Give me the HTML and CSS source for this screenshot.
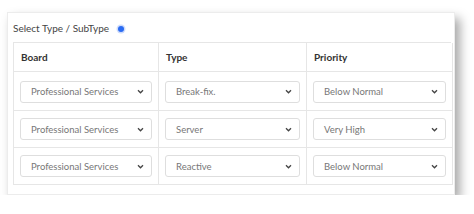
FILE: index.html
```html
<!DOCTYPE html>
<html lang="en">
<head>
    <meta charset="UTF-8">
    <title>Select Type</title>
    <link rel="stylesheet" href="styles.css">
</head>
<body>
    <div class="card">
        <div class="title">Select Type / SubType <span class="dot"></span></div>
        <div class="grid">
            <div class="cell head">Board</div>
            <div class="cell head">Type</div>
            <div class="cell head last">Priority</div>

            <div class="cell row1"><div class="sel">Professional Services<svg viewBox="0 0 8 6"><path d="M1 1.5 4 4.5 7 1.5"/></svg></div></div>
            <div class="cell row1"><div class="sel">Break-fix.<svg viewBox="0 0 8 6"><path d="M1 1.5 4 4.5 7 1.5"/></svg></div></div>
            <div class="cell row1 last"><div class="sel">Below Normal<svg viewBox="0 0 8 6"><path d="M1 1.5 4 4.5 7 1.5"/></svg></div></div>

            <div class="cell"><div class="sel">Professional Services<svg viewBox="0 0 8 6"><path d="M1 1.5 4 4.5 7 1.5"/></svg></div></div>
            <div class="cell"><div class="sel">Server<svg viewBox="0 0 8 6"><path d="M1 1.5 4 4.5 7 1.5"/></svg></div></div>
            <div class="cell last"><div class="sel">Very High<svg viewBox="0 0 8 6"><path d="M1 1.5 4 4.5 7 1.5"/></svg></div></div>

            <div class="cell bottom"><div class="sel">Professional Services<svg viewBox="0 0 8 6"><path d="M1 1.5 4 4.5 7 1.5"/></svg></div></div>
            <div class="cell bottom"><div class="sel">Reactive<svg viewBox="0 0 8 6"><path d="M1 1.5 4 4.5 7 1.5"/></svg></div></div>
            <div class="cell bottom last"><div class="sel">Below Normal<svg viewBox="0 0 8 6"><path d="M1 1.5 4 4.5 7 1.5"/></svg></div></div>
        </div>
    </div>
</body>
</html>
```

FILE: styles.css
```css
*{
    margin: 0;
    padding: 0;
    box-sizing: border-box;
}
body{
    background: #fff;
    font-family: Lato, "Open Sans", sans-serif;
    color: #333;
}
.card{
    margin: 12px 0 0 7px;
    width: 448px;
    height: 183px;
    padding: 0 3px 0 5px;
    background: #fff;
    border: 1px solid #ececec;
    box-shadow: 5px 6px 10px rgba(0,0,0,0.35);
}
.title{
    height: 29px;
    font-size: 10px;
    color: #444;
    display: flex;
    align-items: center;
}
.dot{
    display: inline-block;
    width: 6px;
    height: 6px;
    margin: 3px 0 0 9px;
    border-radius: 50%;
    background: #2a6bf2;
    box-shadow: 0 0 0 1.5px #cfdcfb;
}
.grid{
    display: grid;
    grid-template-columns: 145px 148px 146px;
    grid-template-rows: 29px 39px 37px 37px;
    border-top: 1px solid #e6e6e6;
    border-left: 1px solid #e6e6e6;
}
.cell{
    border-right: 1px solid #e6e6e6;
    border-bottom: 1px solid #e6e6e6;
    padding: 0 6px 0 6px;
    display: flex;
    align-items: center;
}
.head{
    font-weight: bold;
    font-size: 10px;
    color: #333;
    padding-left: 7px;
}
.row1{
    padding-top: 1px;
}
.sel{
    width: 100%;
    height: 22px;
    border: 1px solid #dedede;
    border-radius: 3px;
    padding: 0 7px 0 10px;
    font-size: 9.5px;
    color: #777;
    display: flex;
    align-items: center;
    justify-content: space-between;
    background: #fff;
}
.sel svg{
    width: 7px;
    height: 5px;
    fill: none;
    stroke: #444;
    stroke-width: 1.6;
}
```
